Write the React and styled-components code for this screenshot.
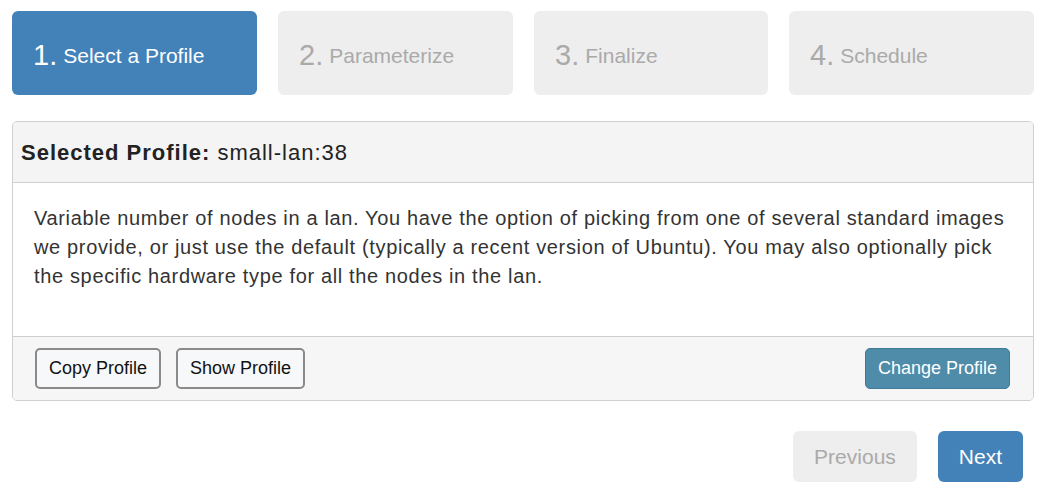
import React from 'react';
import styled, { createGlobalStyle } from 'styled-components';

const GlobalStyle = createGlobalStyle`
  body {
    margin: 0;
    background: #fff;
    font-family: "Liberation Sans", Arial, sans-serif;
    color: #333;
  }
`;

const Page = styled.div`
  padding: 11px 14px 0 12px;
`;

const Steps = styled.div`
  display: grid;
  grid-template-columns: 245px 235px 234px 245px;
  column-gap: 21px;
`;

const Step = styled.div`
  height: 84px;
  border-radius: 6px;
  display: flex;
  align-items: center;
  padding: 5px 21px 0;
  box-sizing: border-box;
  background: ${(p) => (p.active ? '#4282b9' : '#eeeeee')};
  color: ${(p) => (p.active ? '#fff' : '#aaa')};
  font-size: 21px;
`;

const StepNum = styled.span`
  font-size: 29px;
  margin-right: 6px;
`;

const Panel = styled.div`
  margin-top: 26px;
  border: 1px solid #cfcfcf;
  border-radius: 5px;
  overflow: hidden;
`;

const PanelHeader = styled.div`
  background: #f4f4f4;
  border-bottom: 1px solid #cfcfcf;
  height: 61px;
  display: flex;
  align-items: center;
  padding: 2px 8px 0;
  box-sizing: border-box;
  font-size: 22px;
  letter-spacing: 1px;
  color: #222;
`;

const Label = styled.b`
  font-weight: bold;
  margin-right: 7px;
`;

const PanelBody = styled.div`
  background: #fff;
  padding: 21px 21px 0;
  height: 153px;
  box-sizing: border-box;
  p {
    margin: 0;
    font-size: 20px;
    letter-spacing: 0.65px;
    line-height: 29px;
    color: #333;
  }
`;

const PanelFooter = styled.div`
  background: #f6f6f6;
  border-top: 1px solid #cfcfcf;
  display: flex;
  align-items: center;
  gap: 15px;
  padding: 11px 23px 11px 22px;
`;

const Button = styled.button`
  font-family: inherit;
  font-size: 18px;
  height: 41px;
  padding: 0 12px;
  border-radius: 5px;
  cursor: pointer;
  color: ${(p) => (p.primary ? '#fff' : '#111')};
  background: ${(p) => (p.primary ? '#4e8ca9' : '#f7f8fa')};
  border: ${(p) => (p.primary ? '1px solid #3f7b97' : '2px solid #8a8a8a')};
  margin-left: ${(p) => (p.push ? 'auto' : '0')};
`;

const Nav = styled.div`
  display: flex;
  justify-content: flex-end;
  gap: 21px;
  margin-top: 30px;
  padding-right: 11px;
`;

const NavButton = styled.button`
  font-family: inherit;
  font-size: 21px;
  height: 51px;
  padding: 0 21px;
  border: none;
  border-radius: 6px;
  background: ${(p) => (p.disabled ? '#eeeeee' : '#4282b9')};
  color: ${(p) => (p.disabled ? '#aaa' : '#fff')};
`;

const steps = ['Select a Profile', 'Parameterize', 'Finalize', 'Schedule'];

export default function App() {
  return (
    <Page>
      <GlobalStyle />
      <Steps>
        {steps.map((s, i) => (
          <Step key={s} active={i === 0}>
            <StepNum>{i + 1}.</StepNum>
            {s}
          </Step>
        ))}
      </Steps>
      <Panel>
        <PanelHeader>
          <Label>Selected Profile:</Label>
          small-lan:38
        </PanelHeader>
        <PanelBody>
          <p>
            Variable number of nodes in a lan. You have the option of picking from one of several
            standard images we provide, or just use the default (typically a recent version of
            Ubuntu). You may also optionally pick the specific hardware type for all the nodes in
            the lan.
          </p>
        </PanelBody>
        <PanelFooter>
          <Button>Copy Profile</Button>
          <Button>Show Profile</Button>
          <Button primary push>Change Profile</Button>
        </PanelFooter>
      </Panel>
      <Nav>
        <NavButton disabled>Previous</NavButton>
        <NavButton>Next</NavButton>
      </Nav>
    </Page>
  );
}
